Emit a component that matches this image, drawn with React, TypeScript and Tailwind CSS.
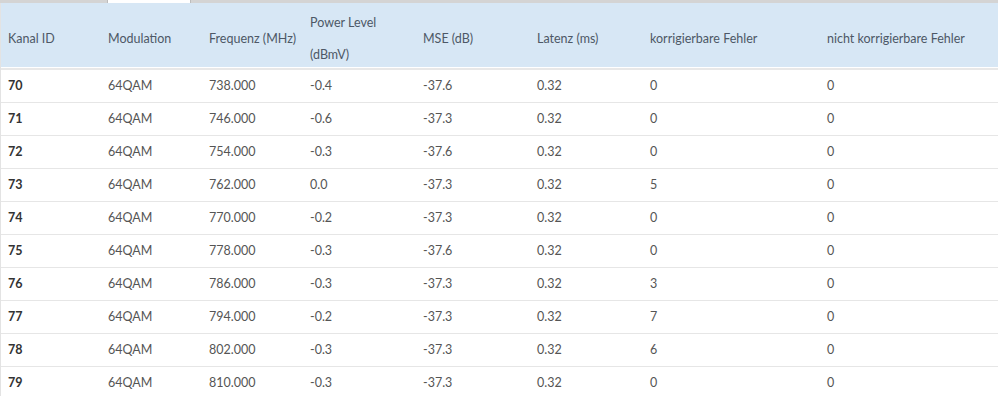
const rows = [
  ['70', '64QAM', '738.000', '-0.4', '-37.6', '0.32', '0', '0'],
  ['71', '64QAM', '746.000', '-0.6', '-37.3', '0.32', '0', '0'],
  ['72', '64QAM', '754.000', '-0.3', '-37.6', '0.32', '0', '0'],
  ['73', '64QAM', '762.000', '0.0', '-37.3', '0.32', '5', '0'],
  ['74', '64QAM', '770.000', '-0.2', '-37.3', '0.32', '0', '0'],
  ['75', '64QAM', '778.000', '-0.3', '-37.6', '0.32', '0', '0'],
  ['76', '64QAM', '786.000', '-0.3', '-37.3', '0.32', '3', '0'],
  ['77', '64QAM', '794.000', '-0.2', '-37.3', '0.32', '7', '0'],
  ['78', '64QAM', '802.000', '-0.3', '-37.3', '0.32', '6', '0'],
  ['79', '64QAM', '810.000', '-0.3', '-37.3', '0.32', '0', '0'],
];

const cols = 'grid grid-cols-[99px_101px_101px_113px_114px_113px_177px_1fr]';

export default function App() {
  return (
    <div className="w-[998px] h-[396px] overflow-hidden bg-white font-['Lato','Noto_Sans',sans-serif] text-[12.5px]">
      <div className="flex h-[3px] bg-[#d4d4d4]">
        <div className="w-[107px]" />
        <div className="w-[84px] bg-white border-x border-[#bdbdbd]" />
      </div>
      <div className="border-l border-[#e3e3e3]">
        <div className={`${cols} h-[64px] pt-[4px] items-center bg-[#d7e7f5] text-[#4d5866]`}>
          <div className="pl-[7px]">Kanal ID</div>
          <div className="pl-2">Modulation</div>
          <div className="pl-2">Frequenz (MHz)</div>
          <div className="pl-2 leading-[32px]">
            Power Level
            <br />
            (dBmV)
          </div>
          <div className="pl-2">MSE (dB)</div>
          <div className="pl-2">Latenz (ms)</div>
          <div className="pl-2">korrigierbare Fehler</div>
          <div className="pl-2">nicht korrigierbare Fehler</div>
        </div>
        <div className="mt-px border-t-2 border-[#e8e8e8]" />
        <div className="text-[#555]">
          {rows.map((r) => (
            <div key={r[0]} className={`${cols} h-[33px] pt-px items-center border-b border-[#e6e6e6]`}>
              {r.map((c, i) => (
                <div key={i} className={i === 0 ? 'pl-[7px] font-bold text-[#333]' : 'pl-2'}>
                  {c}
                </div>
              ))}
            </div>
          ))}
        </div>
      </div>
    </div>
  );
}
